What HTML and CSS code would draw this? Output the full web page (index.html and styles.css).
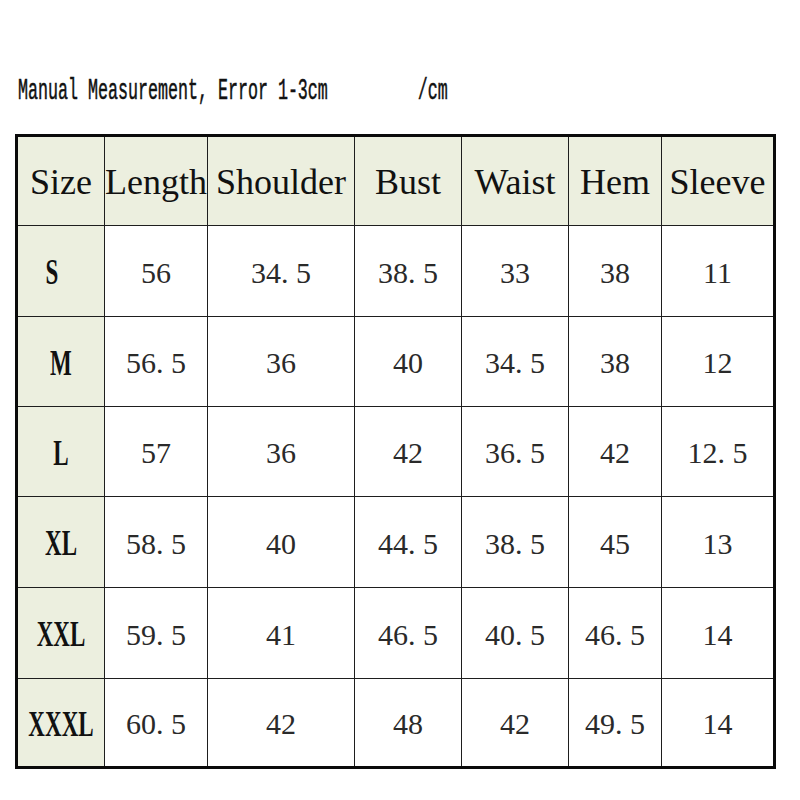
FILE: index.html
```html
<!DOCTYPE html>
<html>
<head>
<meta charset="utf-8">
<link rel="stylesheet" href="styles.css">
</head>
<body>
<div class="note"><span class="note-text">Manual Measurement, Error 1-3cm         /cm</span></div>
<div class="chart">
  <div class="cell head">Size</div>
  <div class="cell head">Length</div>
  <div class="cell head">Shoulder</div>
  <div class="cell head">Bust</div>
  <div class="cell head">Waist</div>
  <div class="cell head">Hem</div>
  <div class="cell head">Sleeve</div>

  <div class="cell label label-s"><span class="lbl">S</span></div>
  <div class="cell num">56</div>
  <div class="cell num">34. 5</div>
  <div class="cell num">38. 5</div>
  <div class="cell num">33</div>
  <div class="cell num">38</div>
  <div class="cell num">11</div>

  <div class="cell label"><span class="lbl">M</span></div>
  <div class="cell num">56. 5</div>
  <div class="cell num">36</div>
  <div class="cell num">40</div>
  <div class="cell num">34. 5</div>
  <div class="cell num">38</div>
  <div class="cell num">12</div>

  <div class="cell label"><span class="lbl">L</span></div>
  <div class="cell num">57</div>
  <div class="cell num">36</div>
  <div class="cell num">42</div>
  <div class="cell num">36. 5</div>
  <div class="cell num">42</div>
  <div class="cell num">12. 5</div>

  <div class="cell label"><span class="lbl">XL</span></div>
  <div class="cell num">58. 5</div>
  <div class="cell num">40</div>
  <div class="cell num">44. 5</div>
  <div class="cell num">38. 5</div>
  <div class="cell num">45</div>
  <div class="cell num">13</div>

  <div class="cell label"><span class="lbl">XXL</span></div>
  <div class="cell num">59. 5</div>
  <div class="cell num">41</div>
  <div class="cell num">46. 5</div>
  <div class="cell num">40. 5</div>
  <div class="cell num">46. 5</div>
  <div class="cell num">14</div>

  <div class="cell label"><span class="lbl">XXXL</span></div>
  <div class="cell num">60. 5</div>
  <div class="cell num">42</div>
  <div class="cell num">48</div>
  <div class="cell num">42</div>
  <div class="cell num">49. 5</div>
  <div class="cell num">14</div>
</div>
</body>
</html>
```

FILE: styles.css
```css
html, body {
  margin: 0;
  padding: 0;
  background: #ffffff;
}

body {
  width: 800px;
  height: 800px;
  overflow: hidden;
}

.note {
  margin-top: 82px;
  padding-left: 18px;
  height: 20px;
  line-height: 20px;
  font-family: "Liberation Mono", monospace;
  font-size: 16.67px;
  color: #111111;
  white-space: pre;
}

.note-text {
  display: inline-block;
  transform: scaleY(1.73);
  transform-origin: 50% 50%;
  -webkit-text-stroke: 0.3px #111111;
}

.chart {
  margin-top: 32px;
  margin-left: 15px;
  width: 755px;
  border: 3px solid #0a0a0a;
  background: #1e1e1e;
  display: grid;
  grid-template-columns: 86px 102px 146px 106px 106px 92px 111px;
  grid-template-rows: 88px 90px 89px 89px 90px 90px 87px;
  gap: 1px;
}

.cell {
  background: #ffffff;
  display: flex;
  align-items: center;
  justify-content: center;
  font-family: "Liberation Serif", serif;
  white-space: nowrap;
}

.head {
  background: #ecefdf;
  font-size: 36px;
  color: #111111;
  padding-top: 2px;
}

.label {
  background: #ecefdf;
  font-size: 36px;
  font-weight: bold;
  color: #111111;
  padding-top: 2px;
}

.label-s {
  padding-right: 17px;
}

.lbl {
  display: inline-block;
  transform: scaleX(0.64);
}

.num {
  font-size: 30px;
  color: #2a2a2a;
  padding-top: 3px;
}

.num,
.head {
  letter-spacing: 0;
}
```
